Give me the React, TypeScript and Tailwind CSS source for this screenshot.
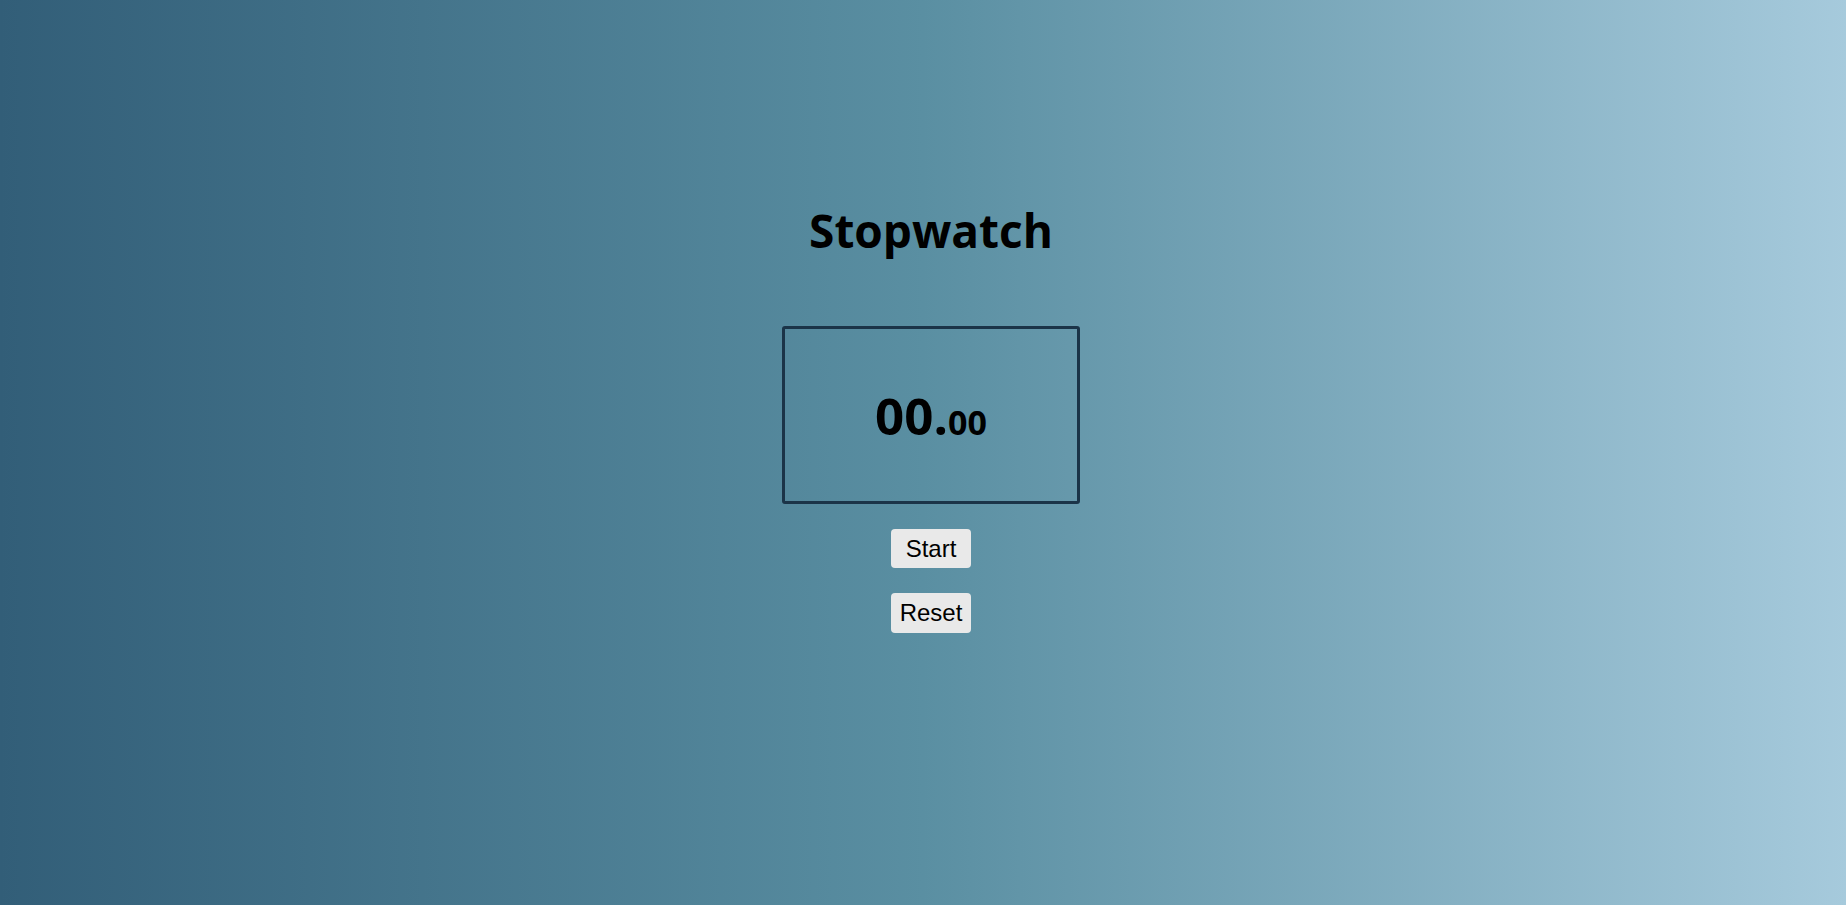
export default function App() {
  return (
    <div className="h-[905px] w-full overflow-hidden bg-linear-to-r from-[#325e78] via-[#5a8fa2] to-[#a6cadc]">
      <div className="flex flex-col items-center pl-[16px] pt-[207px]">
        <h1 className="font-['Open_Sans',sans-serif] text-[46px] font-bold leading-none text-black">
          Stopwatch
        </h1>

        <div className="mt-[73px] flex h-[178px] w-[298px] items-center justify-center rounded-[3px] border-[3px] border-[#1b3448]">
          <div className="font-['Open_Sans',sans-serif] text-[51px] font-bold leading-none text-black">
            00.<span className="text-[34px]">00</span>
          </div>
        </div>

        <div className="mt-[25px] flex flex-col items-center gap-[25px] font-['Liberation_Sans',Arial,sans-serif]">
          <button className="h-[39px] w-[80px] rounded-[4px] bg-[#e9e9e9] text-[24px] leading-none text-black">
            Start
          </button>
          <button className="h-[40px] w-[80px] rounded-[4px] bg-[#e9e9e9] text-[24px] leading-none text-black">
            Reset
          </button>
        </div>
      </div>
    </div>
  )
}
